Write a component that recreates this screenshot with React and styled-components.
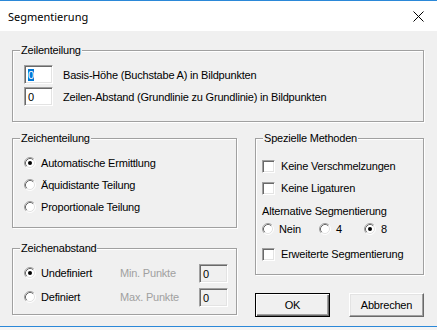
import React from "react";
import styled, { createGlobalStyle } from "styled-components";

const GlobalStyle = createGlobalStyle`
  body {
    margin: 0;
    background: #f4f4f4;
  }
`;

const Window = styled.div`
  width: 437px;
  height: 327px;
  box-sizing: border-box;
  border-top: 1px solid #2b88d8;
  border-bottom: 1px solid #2b88d8;
  display: flex;
  flex-direction: column;
  font-family: "Liberation Sans", Arial, sans-serif;
  font-size: 11px;
  letter-spacing: -0.2px;
  color: #000;
`;

const TitleBar = styled.div`
  height: 30px;
  background: #fff;
  display: flex;
  align-items: center;
  justify-content: space-between;
  padding: 0 13px 0 8px;
`;

const Title = styled.div`
  font-family: "Noto Sans", "Open Sans", sans-serif;
  font-size: 11px;
  letter-spacing: 0;
`;

const Body = styled.div`
  flex: 1;
  background: #f0f0f0;
  padding: 19px 13px 0 12px;
`;

const Group = styled.div`
  position: relative;
  box-sizing: border-box;
  height: ${(p) => p.$h}px;
  border: 1px solid #a0a0a0;
  box-shadow: inset 1px 1px 0 #fff, 1px 1px 0 #fff;
  padding: ${(p) => p.$pad || "0"};
`;

const Legend = styled.span`
  position: absolute;
  top: -7px;
  left: 7px;
  padding: 0 1px;
  background: #f0f0f0;
  line-height: 13px;
`;

const FieldRow = styled.div`
  display: flex;
  align-items: center;
  gap: 10px;
  margin-bottom: 3px;
`;

const Edit = styled.div`
  box-sizing: border-box;
  width: ${(p) => p.$w || 29}px;
  height: 19px;
  border-top: 1px solid #a0a0a0;
  border-left: 1px solid #a0a0a0;
  border-bottom: 1px solid #fff;
  border-right: 1px solid #fff;
  box-shadow: inset 1px 1px 0 #696969, inset -1px -1px 0 #e3e3e3;
  background: ${(p) => (p.$disabled ? "#f0f0f0" : "#fff")};
  padding: 3px 0 0 3px;
  line-height: 12px;
`;

const Selected = styled.span`
  background: #0078d7;
  color: #fff;
`;

const Columns = styled.div`
  display: grid;
  grid-template-columns: 225px 169px;
  column-gap: 18px;
  margin-top: 16px;
`;

const Column = styled.div`
  display: flex;
  flex-direction: column;
  gap: ${(p) => p.$gap}px;
`;

const OptionRow = styled.label`
  display: flex;
  align-items: center;
  gap: ${(p) => p.$gap || 5}px;
  height: ${(p) => p.$h || 22}px;
`;

const OptionList = styled.div`
  display: flex;
  flex-direction: column;
`;

const Muted = styled.span`
  color: #a0a0a0;
`;

const SpacingRow = styled.div`
  display: grid;
  grid-template-columns: 96px 79px 29px;
  align-items: center;
  height: 24px;
`;

const Inline = styled.div`
  display: flex;
  align-items: center;
  height: 22px;
`;

const InlineItem = styled.span`
  display: flex;
  align-items: center;
  gap: 5px;
  width: ${(p) => p.$w}px;
`;

const Caption = styled.div`
  line-height: 14px;
  margin-top: ${(p) => p.$mt || 0}px;
`;

const CheckBox = styled.span`
  box-sizing: border-box;
  width: 13px;
  height: 13px;
  flex: none;
  border-top: 1px solid #a0a0a0;
  border-left: 1px solid #a0a0a0;
  border-bottom: 1px solid #fff;
  border-right: 1px solid #fff;
  box-shadow: inset 1px 1px 0 #696969, inset -1px -1px 0 #e3e3e3;
  background: #fff;
`;

const Buttons = styled.div`
  display: flex;
  justify-content: space-between;
`;

const Button = styled.div`
  box-sizing: border-box;
  width: 75px;
  height: 24px;
  display: flex;
  align-items: center;
  justify-content: center;
  background: #f0f0f0;
  border: 1px solid;
  border-color: ${(p) =>
    p.$default ? "#000" : "#fff #696969 #696969 #fff"};
  box-shadow: ${(p) =>
    p.$default
      ? "inset 1px 1px 0 #fff, inset -1px -1px 0 #696969, inset -2px -2px 0 #a0a0a0"
      : "inset -1px -1px 0 #a0a0a0, inset 1px 1px 0 #e3e3e3"};
`;

const Radio = ({ checked }) => (
  <svg width="12" height="12" viewBox="0 0 12 12" style={{ flex: "none" }}>
    <circle cx="6" cy="6" r="5" fill="#fff" />
    <path d="M2.11 9.89 A5.5 5.5 0 0 1 9.89 2.11" fill="none" stroke="#a0a0a0" />
    <path d="M9.89 2.11 A5.5 5.5 0 0 1 2.11 9.89" fill="none" stroke="#fff" />
    <path d="M2.82 9.18 A4.5 4.5 0 0 1 9.18 2.82" fill="none" stroke="#696969" />
    <path d="M9.18 2.82 A4.5 4.5 0 0 1 2.82 9.18" fill="none" stroke="#e3e3e3" />
    {checked && <circle cx="6" cy="6" r="2" fill="#000" />}
  </svg>
);

const CloseIcon = () => (
  <svg width="11" height="11" viewBox="0 0 11 11">
    <path d="M0.5 0.5 L10.5 10.5 M10.5 0.5 L0.5 10.5" stroke="#000" strokeWidth="1" />
  </svg>
);

export default function App() {
  return (
    <>
      <GlobalStyle />
      <Window>
        <TitleBar>
          <Title>Segmentierung</Title>
          <CloseIcon />
        </TitleBar>
        <Body>
          <Group $h={72} $pad="14px 0 0 11px">
            <Legend>Zeilenteilung</Legend>
            <FieldRow>
              <Edit>
                <Selected>0</Selected>
              </Edit>
              <span>Basis-Höhe (Buchstabe A) in Bildpunkten</span>
            </FieldRow>
            <FieldRow>
              <Edit>0</Edit>
              <span>Zeilen-Abstand (Grundlinie zu Grundlinie) in Bildpunkten</span>
            </FieldRow>
          </Group>

          <Columns>
            <Column $gap={20}>
              <Group $h={90} $pad="13px 0 0 11px">
                <Legend>Zeichenteilung</Legend>
                <OptionList>
                  <OptionRow>
                    <Radio checked />
                    Automatische Ermittlung
                  </OptionRow>
                  <OptionRow>
                    <Radio />
                    Äquidistante Teilung
                  </OptionRow>
                  <OptionRow>
                    <Radio />
                    Proportionale Teilung
                  </OptionRow>
                </OptionList>
              </Group>

              <Group $h={67} $pad="12px 0 0 11px">
                <Legend>Zeichenabstand</Legend>
                <SpacingRow>
                  <OptionRow $h={24}>
                    <Radio checked />
                    Undefiniert
                  </OptionRow>
                  <Muted>Min. Punkte</Muted>
                  <Edit $disabled>0</Edit>
                </SpacingRow>
                <SpacingRow>
                  <OptionRow $h={24}>
                    <Radio />
                    Definiert
                  </OptionRow>
                  <Muted>Max. Punkte</Muted>
                  <Edit $disabled>0</Edit>
                </SpacingRow>
              </Group>
            </Column>

            <Column $gap={18}>
              <Group $h={137} $pad="16px 0 0 6px">
                <Legend>Spezielle Methoden</Legend>
                <OptionList>
                  <OptionRow $gap={6}>
                    <CheckBox />
                    Keine Verschmelzungen
                  </OptionRow>
                  <OptionRow $gap={6}>
                    <CheckBox />
                    Keine Ligaturen
                  </OptionRow>
                </OptionList>
                <Caption $mt={5}>Alternative Segmentierung</Caption>
                <Inline>
                  <InlineItem $w={57}>
                    <Radio />
                    Nein
                  </InlineItem>
                  <InlineItem $w={45}>
                    <Radio />4
                  </InlineItem>
                  <InlineItem $w={40}>
                    <Radio checked />8
                  </InlineItem>
                </Inline>
                <OptionRow $gap={6} $h={28}>
                  <CheckBox />
                  Erweiterte Segmentierung
                </OptionRow>
              </Group>
              <Buttons>
                <Button $default>OK</Button>
                <Button>Abbrechen</Button>
              </Buttons>
            </Column>
          </Columns>
        </Body>
      </Window>
    </>
  );
}
